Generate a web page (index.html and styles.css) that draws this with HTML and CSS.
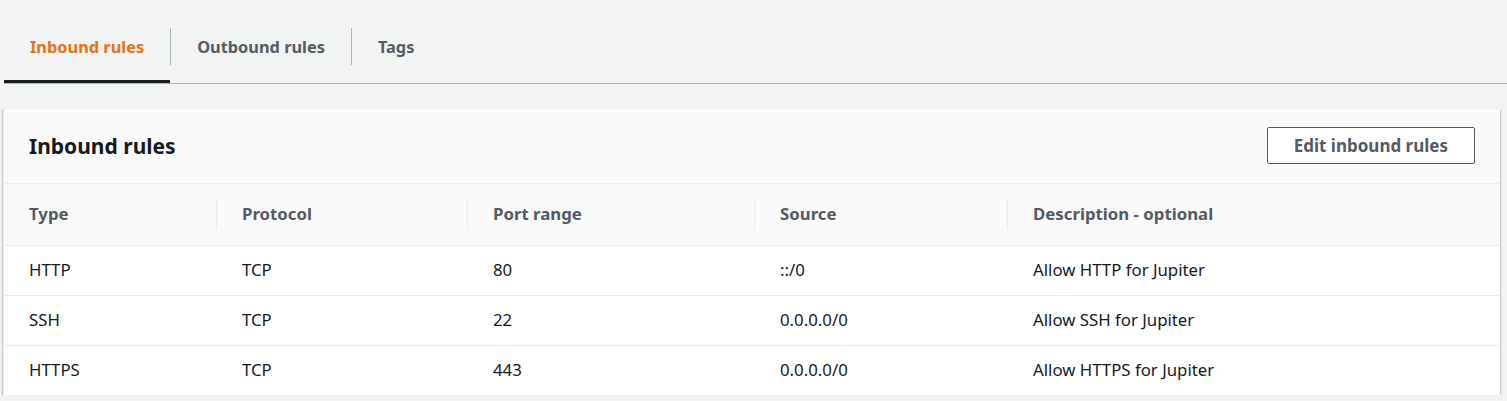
FILE: index.html
```html
<!DOCTYPE html>
<html>
<head>
<meta charset="utf-8">
<link rel="stylesheet" href="styles.css">
</head>
<body>
<div class="page">
  <nav class="tabs">
    <div class="tab active">Inbound rules</div>
    <div class="sep"></div>
    <div class="tab">Outbound rules</div>
    <div class="sep"></div>
    <div class="tab">Tags</div>
  </nav>
  <section class="card">
    <header class="card-head">
      <h2>Inbound rules</h2>
      <button class="btn">Edit inbound rules</button>
    </header>
    <table class="rules">
      <colgroup>
        <col class="c1"><col class="c2"><col class="c3"><col class="c4"><col class="c5">
      </colgroup>
      <thead>
        <tr>
          <th><span>Type</span></th>
          <th><span>Protocol</span></th>
          <th><span>Port range</span></th>
          <th><span>Source</span></th>
          <th><span>Description - optional</span></th>
        </tr>
      </thead>
      <tbody>
        <tr><td>HTTP</td><td>TCP</td><td>80</td><td>::/0</td><td>Allow HTTP for Jupiter</td></tr>
        <tr><td>SSH</td><td>TCP</td><td>22</td><td>0.0.0.0/0</td><td>Allow SSH for Jupiter</td></tr>
        <tr><td>HTTPS</td><td>TCP</td><td>443</td><td>0.0.0.0/0</td><td>Allow HTTPS for Jupiter</td></tr>
      </tbody>
    </table>
  </section>
</div>
</body>
</html>
```
FILE: styles.css
```css
* { box-sizing: border-box; }
html, body { margin: 0; padding: 0; }
body {
  background: #f2f3f3;
  font-family: "Noto Sans", "Open Sans", sans-serif;
  font-size: 16.8px;
  color: #16191f;
}
.page {
  padding: 0 7px 0 3px;
}
.tabs {
  display: flex;
  align-items: flex-start;
  height: 84px;
  border-bottom: 1px solid #aab7b8;
  margin-left: 1px;
  margin-right: -7px;
}
.tab {
  height: 83px;
  display: flex;
  align-items: center;
  padding: 13px 26px 0 26px;
  font-size: 16.35px;
  font-weight: 700;
  color: #545b64;
  border-bottom: 3px solid transparent;
}
.tab.active {
  color: #ec7211;
  border-bottom-color: #16191f;
}
.sep {
  width: 1px;
  height: 37px;
  background: #aab7b8;
  margin-top: 28px;
}
.card {
  margin-top: 25px;
  background: #fff;
  border-left: 1px solid #eaeded;
  box-shadow: 0 1px 1px 0 rgba(0,28,36,.3), 1px 1px 1px 0 rgba(0,28,36,.15), -1px 1px 1px 0 rgba(0,28,36,.15);
}
.card-head {
  display: flex;
  align-items: center;
  justify-content: space-between;
  height: 75px;
  padding: 0 25px 0 25px;
  background: #fafafa;
  border-bottom: 1px solid #eaeded;
}
.card-head h2 {
  margin: 0;
  font-size: 21px;
  font-weight: 700;
  color: #16191f;
}
.btn {
  font-family: inherit;
  font-size: 17px;
  font-weight: 700;
  color: #545b64;
  background: #fff;
  border: 1px solid #545b64;
  border-radius: 2px;
  height: 37px;
  padding: 0 26px;
  margin-top: -1px;
}
.rules {
  width: 100%;
  border-collapse: collapse;
  table-layout: fixed;
}
.c1 { width: 212px; }
.c2 { width: 251px; }
.c3 { width: 287px; }
.c4 { width: 253px; }
.rules th {
  background: #fafafa;
  height: 61px;
  text-align: left;
  font-weight: 700;
  color: #545b64;
  padding: 0;
  border-bottom: 1px solid #eaeded;
}
.rules th span {
  display: block;
  padding: 5px 0 5px 25px;
  border-left: 1px solid #eaeded;
  line-height: 20px;
}
.rules th:first-child span { border-left: none; }
.rules td {
  height: 50px;
  padding: 0 0 2px 26px;
  border-bottom: 1px solid #eaeded;
  color: #16191f;
}
.rules td:first-child { padding-left: 25px; }
.rules tbody tr:last-child td { border-bottom: none; }
```
